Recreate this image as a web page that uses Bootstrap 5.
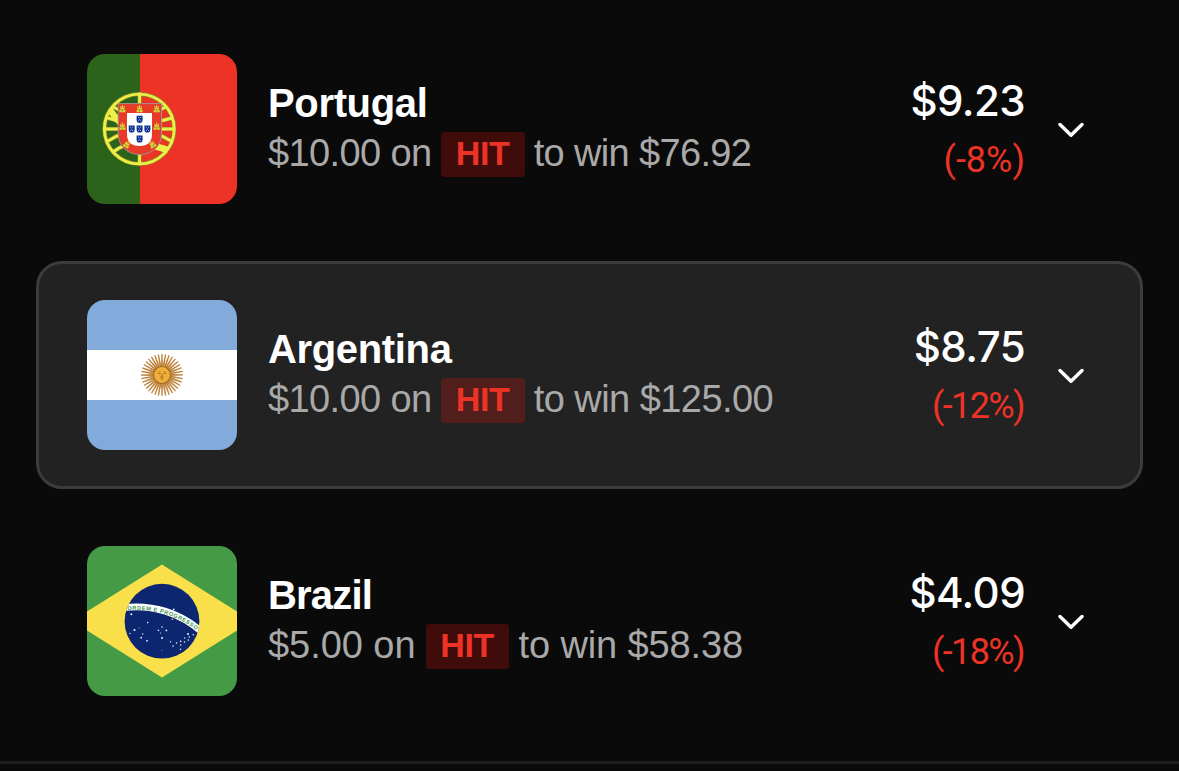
<!DOCTYPE html>
<html lang="en">
<head>
<meta charset="utf-8">
<meta name="viewport" content="width=device-width, initial-scale=1">
<title>Positions</title>
<link href="https://cdn.jsdelivr.net/npm/bootstrap@5.3.0/dist/css/bootstrap.min.css" rel="stylesheet">
<style>
body{background:#0a0a0a;color:#fff;font-family:"Liberation Sans",Arial,sans-serif;overflow:hidden}
.positions{padding:15px 36px 0;gap:18px}
.position{height:228px;padding:36px 55px 36px 48px;border:3px solid transparent;border-radius:26px}
.position.active{background:#222;border-color:#3c3c3c}
.flag{width:150px;height:150px;border-radius:18px;flex:none}
.info{margin-left:31px;padding-top:25px}
.team{font-size:40px;line-height:48px;letter-spacing:-.35px}
.stake{font-size:38px;line-height:43px;color:#a9a9a9;margin-top:5px}
.stake .amount{letter-spacing:-.6px}
.stake .win{letter-spacing:-.65px;margin-left:9px}
.active .win{letter-spacing:-.55px}
.hit{width:84px;height:45px;margin-left:9px;border-radius:4px;background:rgba(240,20,12,.24);color:#ec3325;font-size:34px;line-height:43px;font-weight:700;letter-spacing:-.4px}
.brazil .team{letter-spacing:-.8px}
.brazil .amount{letter-spacing:-.05px}
.brazil .hit{width:83px;margin-left:10px}
.brazil .win{letter-spacing:-.12px;margin-left:10px}
.quote{padding-top:19px}
.price{font-family:Inter,sans-serif;font-size:42px;font-weight:500;line-height:56px;letter-spacing:-.6px}
.change{font-family:Roboto,sans-serif;font-size:36px;line-height:49px;color:#ec3325;margin-top:7px;letter-spacing:0}
.change.wide{letter-spacing:-1.6px;margin-right:1px}
.chev{width:26px;height:16px;margin-right:1px;margin-left:33px;margin-top:68px;flex:none}
.divider{height:3px;margin-top:26px;background:#1e1e1e}
</style>
</head>
<body>
<main class="positions d-flex flex-column">
  <section class="position d-flex align-items-start">
    <svg class="flag" viewBox="0 0 150 150" role="img" aria-label="Portugal">
      <defs>
        <g id="castle"><path d="M-3 3.5V1H-2.2V-2.6H-1.2V-1H-.5V-3.8H.5V-1H1.2V-2.6H2.2V1H3V3.5Z" fill="#dcd838"/><path d="M0 3.5V1.6M-2.6 1H2.6" stroke="#806a1e" stroke-width=".5"/></g>
        <g id="quina"><path d="M-3-3.6H3V.4Q3 3.6 0 3.6T-3 .4Z" fill="#0c3192"/><path d="M-1.5-1.8h.9M.6-1.8h.9M-.45 0h.9M-1.5 1.5h.9M.6 1.5h.9" stroke="#c5d1ee" stroke-width=".9"/></g>
      </defs>
      <path fill="#2c631a" d="M0 0H53V150H0Z"/><path fill="#ec3325" d="M53 0H150V150H53Z"/>
      <g fill="none" stroke-linecap="round">
        <g stroke="#8b8c25" stroke-width="4.2">
          <circle cx="52.3" cy="75" r="34.9"/><path d="M52.6 40V110M18 75H87M26 53Q52 67 79 53M21 64Q52 74 85 64M21 87Q52 67 84 87M26 98Q52 79 79 98"/>
        </g>
        <g stroke="#eeee49" stroke-width="2.9">
          <circle cx="52.3" cy="75" r="34.9"/><path d="M52.6 40V110M18 75H87M26 53Q52 67 79 53M21 64Q52 74 85 64M21 87Q52 67 84 87M26 98Q52 79 79 98"/>
        </g>
        <path d="M24.5 58C35 74 59 91 78 95" stroke="#eeee49" stroke-width="6.5"/>
      </g>
      <path d="M31.2 49.6H74.5V80C74.5 92 65 100.5 52.8 100.5S31.2 92 31.2 80Z" fill="#e83a29" stroke="#a49090" stroke-width="1"/>
      <path d="M40 59H65V80Q65 92 52.5 92T40 80Z" fill="#fff"/>
      <use href="#quina" x="52.6" y="65.3"/><use href="#quina" x="44.7" y="75"/><use href="#quina" x="52.6" y="75"/><use href="#quina" x="60.4" y="75"/><use href="#quina" x="52.6" y="85"/>
      <use href="#castle" x="35.4" y="54.7"/><use href="#castle" x="52.6" y="54.7"/><use href="#castle" x="69.7" y="54.7"/><use href="#castle" x="35.4" y="72.3"/><use href="#castle" x="69.7" y="72.3"/><use href="#castle" transform="translate(40 90.3) rotate(30)"/><use href="#castle" transform="translate(65.3 90.3) rotate(-30)"/>
    </svg>
    <div class="info">
      <div class="team fw-bold">Portugal</div>
      <div class="stake d-flex text-nowrap"><span class="amount">$10.00 on</span><span class="hit text-center">HIT</span><span class="win">to win $76.92</span></div>
    </div>
    <div class="quote ms-auto text-end"><div class="price">$9.23</div><div class="change">(-8%)</div></div>
    <svg class="chev" viewBox="0 0 26 16" fill="none" stroke="#fff" stroke-width="3.4" stroke-linecap="round" stroke-linejoin="round"><path d="M2 2.5 13 13.3 24 2.5"/></svg>
  </section>

  <section class="position active d-flex align-items-start">
    <svg class="flag" viewBox="0 0 150 150" role="img" aria-label="Argentina">
      <path fill="#82aadb" d="M0 0H150V150H0Z"/><path fill="#fff" d="M0 50H150V100H0Z"/>
      <g id="rays" transform="translate(75 75)" fill="#bd8138"></g>
      <circle cx="75" cy="75" r="8.5" fill="#edb13b" stroke="#a66b25" stroke-width="1.2"/>
      <path d="M71 73.4h2.7M76.4 73.4h2.7M75 74v2.5M73.2 77.2h3.6M74 79.3h2" fill="none" stroke="#a5621f" stroke-width="1"/>
      <path d="M70.7 72Q72.5 70.8 74 72.2M76 72.2Q77.5 70.8 79.3 72" fill="none" stroke="#b97524" stroke-width=".6"/>
    </svg>
    <div class="info">
      <div class="team fw-bold">Argentina</div>
      <div class="stake d-flex text-nowrap"><span class="amount">$10.00 on</span><span class="hit text-center">HIT</span><span class="win">to win $125.00</span></div>
    </div>
    <div class="quote ms-auto text-end"><div class="price">$8.75</div><div class="change wide">(-12%)</div></div>
    <svg class="chev" viewBox="0 0 26 16" fill="none" stroke="#fff" stroke-width="3.4" stroke-linecap="round" stroke-linejoin="round"><path d="M2 2.5 13 13.3 24 2.5"/></svg>
  </section>

  <section class="position brazil d-flex align-items-start">
    <svg class="flag" viewBox="0 0 150 150" role="img" aria-label="Brazil">
      <defs><clipPath id="globe"><circle cx="75" cy="75.2" r="37.4"/></clipPath><path id="motto" d="M40.5 64.2A98 98 0 0 1 114 88"/></defs>
      <path fill="#459a45" d="M0 0H150V150H0Z"/><path fill="#f9e04a" d="M75 18.5 165 75 75 131.5-15 75Z"/>
      <circle cx="75" cy="75.2" r="37.4" fill="#0c2670"/>
      <g clip-path="url(#globe)"><path d="M34 62A98 98 0 0 1 117 88" fill="none" stroke="#fff" stroke-width="6.7"/></g>
      <text font-family="Liberation Sans" font-weight="700" font-size="5.6" fill="#3d9150"><textPath href="#motto" textLength="73">ORDEM E PROGRESSO</textPath></text>
      <g fill="#e8edfa"><circle cx="44.3" cy="68.3" r="1"/><circle cx="86.7" cy="63.3" r=".9"/><circle cx="85.3" cy="73.3" r=".8"/><circle cx="60.7" cy="76.6" r=".8"/><circle cx="47.5" cy="84" r="1.1"/><circle cx="43" cy="87.5" r=".7"/><circle cx="52" cy="82" r=".5"/><circle cx="55.8" cy="88" r=".7"/><circle cx="54.2" cy="91.7" r=".9"/><circle cx="60" cy="94.7" r=".9"/><circle cx="75" cy="81" r=".8"/><circle cx="71.4" cy="84.4" r=".8"/><circle cx="79.4" cy="84.4" r=".9"/><circle cx="73.5" cy="87" r=".6"/><circle cx="75" cy="92" r="1"/><circle cx="75" cy="104.5" r=".4"/><circle cx="83.5" cy="95.8" r=".7"/><circle cx="86" cy="100" r=".8"/><circle cx="89.6" cy="97" r=".8"/><circle cx="93.7" cy="95.4" r=".8"/><circle cx="93.7" cy="99" r=".8"/><circle cx="93.5" cy="103.3" r=".8"/><circle cx="97.5" cy="96" r=".8"/><circle cx="97.7" cy="92" r=".7"/><circle cx="101.3" cy="94" r=".8"/><circle cx="101" cy="88" r="1"/><circle cx="102.3" cy="91" r=".8"/><circle cx="106.3" cy="88.7" r=".8"/></g>
    </svg>
    <div class="info">
      <div class="team fw-bold">Brazil</div>
      <div class="stake d-flex text-nowrap"><span class="amount">$5.00 on</span><span class="hit text-center">HIT</span><span class="win">to win $58.38</span></div>
    </div>
    <div class="quote ms-auto text-end"><div class="price">$4.09</div><div class="change wide">(-18%)</div></div>
    <svg class="chev" viewBox="0 0 26 16" fill="none" stroke="#fff" stroke-width="3.4" stroke-linecap="round" stroke-linejoin="round"><path d="M2 2.5 13 13.3 24 2.5"/></svg>
  </section>
</main>
<div class="divider"></div>
<script src="https://cdn.jsdelivr.net/npm/bootstrap@5.3.0/dist/js/bootstrap.bundle.min.js"></script>
<script>
// Sun rays, evenly spaced around the disc
const rays = document.getElementById('rays');
for (let i = 0; i < 36; i++) {
  const p = document.createElementNS('http://www.w3.org/2000/svg', 'path');
  p.setAttribute('d', 'M-.95-8 -.65-21H.55L.95-8Z');
  p.setAttribute('transform', `rotate(${i * 10})`);
  rays.appendChild(p);
}
</script>
</body>
</html>
